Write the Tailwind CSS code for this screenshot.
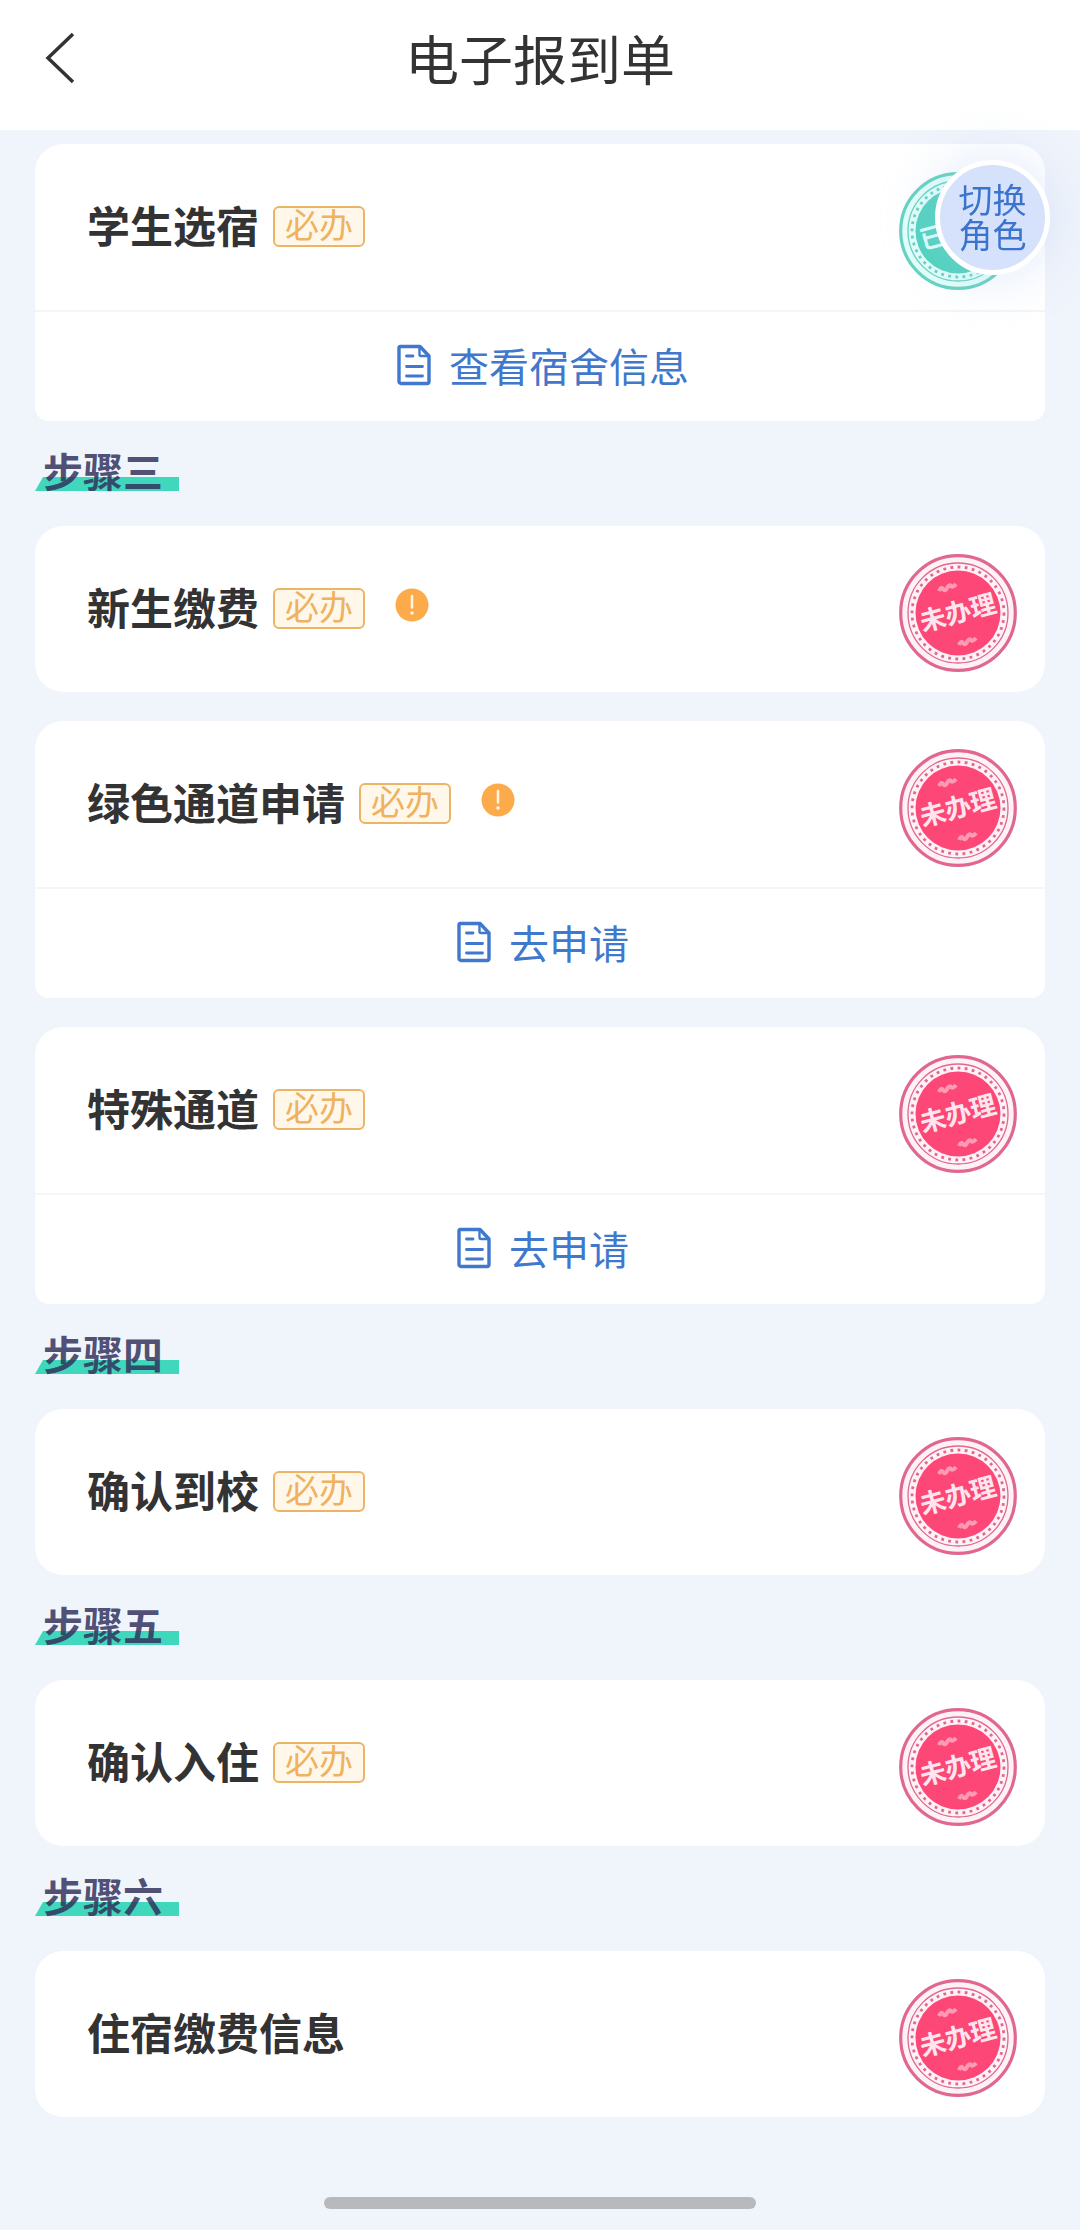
<!DOCTYPE html>
<html lang="zh-CN">
<head>
    <meta charset="UTF-8">
    <meta name="viewport" content="width=device-width, initial-scale=1.0">
    <title>电子报到单</title>
    <script src="https://cdn.jsdelivr.net/npm/@tailwindcss/browser@4"></script>
</head>
<body class="flex min-h-screen flex-col bg-[#f0f4fb] font-['Noto_Sans_CJK_SC',sans-serif] text-[#333333]">
    <!-- Shared icons -->
    <svg class="hidden">
        <symbol id="doc" viewBox="0 0 34 42">
            <path d="M3.5 2.5H23L32 12V37.5a2 2 0 0 1-2 2H4a2 2 0 0 1-2-2V4a1.5 1.5 0 0 1 1.5-1.5Z" fill="none" stroke="currentColor" stroke-width="3.4" stroke-linejoin="round"/>
            <path d="M22.500 3V10.5a1.5 1.5 0 0 0 1.5 1.5H31.5" fill="none" stroke="currentColor" stroke-width="2.4"/>
            <path d="M9.500 12H16M9.500 22.5H25.500M9.500 32H25.500" fill="none" stroke="currentColor" stroke-width="2.8" stroke-linecap="round"/>
        </symbol>
        <symbol id="alert" viewBox="0 0 34 34">
            <circle cx="17" cy="17" r="16.5" fill="#fdab4a"/>
            <path d="M17 8V19.5" stroke="#fff6e8" stroke-width="2.5" stroke-linecap="round"/>
            <circle cx="17" cy="25" r="1.8" fill="#fff6e8"/>
        </symbol>
        <symbol id="rings" viewBox="0 0 118 118">
            <circle cx="59" cy="59" r="57.3" fill="none" stroke="currentColor" stroke-width="3.2"/>
            <circle cx="59" cy="59" r="50" fill="none" stroke="currentColor" stroke-width="1.3"/>
            <circle cx="59" cy="59" r="46" fill="none" stroke="currentColor" stroke-width="2.8" stroke-dasharray="2.8 4.4"/>
        </symbol>
        <symbol id="waves" viewBox="0 0 118 118">
            <path d="M40 37q2-5 4-2t4-1t4-2t5-2M60 91q2-5 4-2t4-1t4-2t5-2" fill="none" stroke="#ffffff" stroke-opacity="0.45" stroke-width="4"/>
        </symbol>
        <symbol id="stamp-todo" viewBox="0 0 118 118">
            <circle cx="59" cy="59" r="58" fill="#fff2f6"/>
            <use href="#rings" class="text-[#e0688f]"/>
            <circle cx="59" cy="59" r="42.5" fill="#fd4777"/>
            <use href="#waves"/>
            <text x="59" y="68" text-anchor="middle" font-size="26" font-weight="700" fill="#ffe6ee" transform="rotate(-15 59 59)">未办理</text>
        </symbol>
        <symbol id="stamp-done" viewBox="0 0 118 118">
            <circle cx="59" cy="59" r="58" fill="#e2fffa"/>
            <use href="#rings" class="text-[#66d2bf]"/>
            <circle cx="59" cy="59" r="42.5" fill="#4fd3bc"/>
            <use href="#waves"/>
            <text x="59" y="68" text-anchor="middle" font-size="26" font-weight="700" fill="#dcfff8" transform="rotate(-15 59 59)">已办理</text>
        </symbol>
    </svg>

    <header class="grid h-[130px] grid-cols-[1fr_auto_1fr] items-start bg-white px-10 pt-7">
        <button type="button" aria-label="返回" class="flex h-[60px] w-10 items-center">
            <svg class="h-[52px] w-10" viewBox="0 0 40 52" fill="none" stroke="#333333" stroke-width="3.5"><path d="M33 2L8 26L33 50"/></svg>
        </button>
        <h1 class="text-[54px] leading-[60px]">电子报到单</h1>
    </header>

    <main class="px-[35px] pt-[14px]">
        <section class="rounded-t-[28px] rounded-b-[14px] bg-white">
            <div class="flex items-start justify-between pt-7 pr-7 pb-5 pl-[52px]">
                <div class="flex items-center gap-[14px] pt-7">
                    <h3 class="text-[43px] leading-[48px] font-bold">学生选宿</h3>
                    <span class="mt-1 rounded-md border-2 border-[#ecb566] bg-[#fff8ea] px-[10px] pb-[6px] text-[34px] leading-[31px] text-[#eeb260]">必办</span>
                </div>
                <svg class="size-[118px]" role="img" aria-label="已办理"><use href="#stamp-done"/></svg>
            </div>
            <a href="#" class="flex h-[111px] items-center justify-center gap-[18px] border-t-2 border-[#f4f5f7] pb-1 pl-[6px] text-[40px] leading-[48px] text-[#3f78cc]">
                <svg class="h-[42px] w-[34px]"><use href="#doc"/></svg>
                查看宿舍信息
            </a>
        </section>

        <div class="flex h-[105px] items-start pt-[21px]">
            <h2 class="relative isolate pr-4 pl-2 text-[40px] leading-[56px] font-bold text-[#33335c]/85">
                <svg class="absolute bottom-[7px] left-0 -z-10 h-[14px] w-full" viewBox="0 0 144 14" preserveAspectRatio="none"><path d="M8 0H144V14H0Z" fill="#3fd8bd"/></svg>
                步骤三
            </h2>
        </div>

        <div class="flex flex-col gap-[29px]">
            <section class="rounded-[28px] bg-white">
                <div class="flex items-start justify-between pt-7 pr-7 pb-5 pl-[52px]">
                    <div class="flex items-center gap-[14px] pt-7">
                        <h3 class="text-[43px] leading-[48px] font-bold">新生缴费</h3>
                        <span class="mt-1 rounded-md border-2 border-[#ecb566] bg-[#fff8ea] px-[10px] pb-[6px] text-[34px] leading-[31px] text-[#eeb260]">必办</span>
                        <svg class="mb-[2px] ml-4 size-[34px]" role="img" aria-label="提示"><use href="#alert"/></svg>
                    </div>
                    <svg class="size-[118px]" role="img" aria-label="未办理"><use href="#stamp-todo"/></svg>
                </div>
            </section>

            <section class="rounded-t-[28px] rounded-b-[14px] bg-white">
                <div class="flex items-start justify-between pt-7 pr-7 pb-5 pl-[52px]">
                    <div class="flex items-center gap-[14px] pt-7">
                        <h3 class="text-[43px] leading-[48px] font-bold">绿色通道申请</h3>
                        <span class="mt-1 rounded-md border-2 border-[#ecb566] bg-[#fff8ea] px-[10px] pb-[6px] text-[34px] leading-[31px] text-[#eeb260]">必办</span>
                        <svg class="mb-[2px] ml-4 size-[34px]" role="img" aria-label="提示"><use href="#alert"/></svg>
                    </div>
                    <svg class="size-[118px]" role="img" aria-label="未办理"><use href="#stamp-todo"/></svg>
                </div>
                <a href="#" class="flex h-[111px] items-center justify-center gap-[18px] border-t-2 border-[#f4f5f7] pb-1 pl-[6px] text-[40px] leading-[48px] text-[#3f78cc]">
                    <svg class="h-[42px] w-[34px]"><use href="#doc"/></svg>
                    去申请
                </a>
            </section>

            <section class="rounded-t-[28px] rounded-b-[14px] bg-white">
                <div class="flex items-start justify-between pt-7 pr-7 pb-5 pl-[52px]">
                    <div class="flex items-center gap-[14px] pt-7">
                        <h3 class="text-[43px] leading-[48px] font-bold">特殊通道</h3>
                        <span class="mt-1 rounded-md border-2 border-[#ecb566] bg-[#fff8ea] px-[10px] pb-[6px] text-[34px] leading-[31px] text-[#eeb260]">必办</span>
                    </div>
                    <svg class="size-[118px]" role="img" aria-label="未办理"><use href="#stamp-todo"/></svg>
                </div>
                <a href="#" class="flex h-[111px] items-center justify-center gap-[18px] border-t-2 border-[#f4f5f7] pb-1 pl-[6px] text-[40px] leading-[48px] text-[#3f78cc]">
                    <svg class="h-[42px] w-[34px]"><use href="#doc"/></svg>
                    去申请
                </a>
            </section>
        </div>

        <div class="flex h-[105px] items-start pt-[21px]">
            <h2 class="relative isolate pr-4 pl-2 text-[40px] leading-[56px] font-bold text-[#33335c]/85">
                <svg class="absolute bottom-[7px] left-0 -z-10 h-[14px] w-full" viewBox="0 0 144 14" preserveAspectRatio="none"><path d="M8 0H144V14H0Z" fill="#3fd8bd"/></svg>
                步骤四
            </h2>
        </div>

        <section class="rounded-[28px] bg-white">
            <div class="flex items-start justify-between pt-7 pr-7 pb-5 pl-[52px]">
                <div class="flex items-center gap-[14px] pt-7">
                    <h3 class="text-[43px] leading-[48px] font-bold">确认到校</h3>
                    <span class="mt-1 rounded-md border-2 border-[#ecb566] bg-[#fff8ea] px-[10px] pb-[6px] text-[34px] leading-[31px] text-[#eeb260]">必办</span>
                </div>
                <svg class="size-[118px]" role="img" aria-label="未办理"><use href="#stamp-todo"/></svg>
            </div>
        </section>

        <div class="flex h-[105px] items-start pt-[21px]">
            <h2 class="relative isolate pr-4 pl-2 text-[40px] leading-[56px] font-bold text-[#33335c]/85">
                <svg class="absolute bottom-[7px] left-0 -z-10 h-[14px] w-full" viewBox="0 0 144 14" preserveAspectRatio="none"><path d="M8 0H144V14H0Z" fill="#3fd8bd"/></svg>
                步骤五
            </h2>
        </div>

        <section class="rounded-[28px] bg-white">
            <div class="flex items-start justify-between pt-7 pr-7 pb-5 pl-[52px]">
                <div class="flex items-center gap-[14px] pt-7">
                    <h3 class="text-[43px] leading-[48px] font-bold">确认入住</h3>
                    <span class="mt-1 rounded-md border-2 border-[#ecb566] bg-[#fff8ea] px-[10px] pb-[6px] text-[34px] leading-[31px] text-[#eeb260]">必办</span>
                </div>
                <svg class="size-[118px]" role="img" aria-label="未办理"><use href="#stamp-todo"/></svg>
            </div>
        </section>

        <div class="flex h-[105px] items-start pt-[21px]">
            <h2 class="relative isolate pr-4 pl-2 text-[40px] leading-[56px] font-bold text-[#33335c]/85">
                <svg class="absolute bottom-[7px] left-0 -z-10 h-[14px] w-full" viewBox="0 0 144 14" preserveAspectRatio="none"><path d="M8 0H144V14H0Z" fill="#3fd8bd"/></svg>
                步骤六
            </h2>
        </div>

        <section class="rounded-[28px] bg-white">
            <div class="flex items-start justify-between pt-7 pr-7 pb-5 pl-[52px]">
                <div class="flex items-center gap-[14px] pt-7">
                    <h3 class="text-[43px] leading-[48px] font-bold">住宿缴费信息</h3>
                </div>
                <svg class="size-[118px]" role="img" aria-label="未办理"><use href="#stamp-todo"/></svg>
            </div>
        </section>
    </main>

    <!-- Home indicator -->
    <div class="mt-auto flex justify-center pt-8 pb-[21px]">
        <div class="h-3 w-2/5 rounded-full bg-[#b8b9bd]"></div>
    </div>

    <!-- Floating role switch -->
    <button type="button" class="fixed top-40 right-[30px] size-[115px] rounded-full border-[5px] border-white bg-[#d6e2fb] pb-1 text-[34px] leading-[35px] text-[#3b74cf] shadow-[0_0_50px_6px_rgba(170,195,245,0.3)]">切换<br>角色</button>
</body>
</html>
